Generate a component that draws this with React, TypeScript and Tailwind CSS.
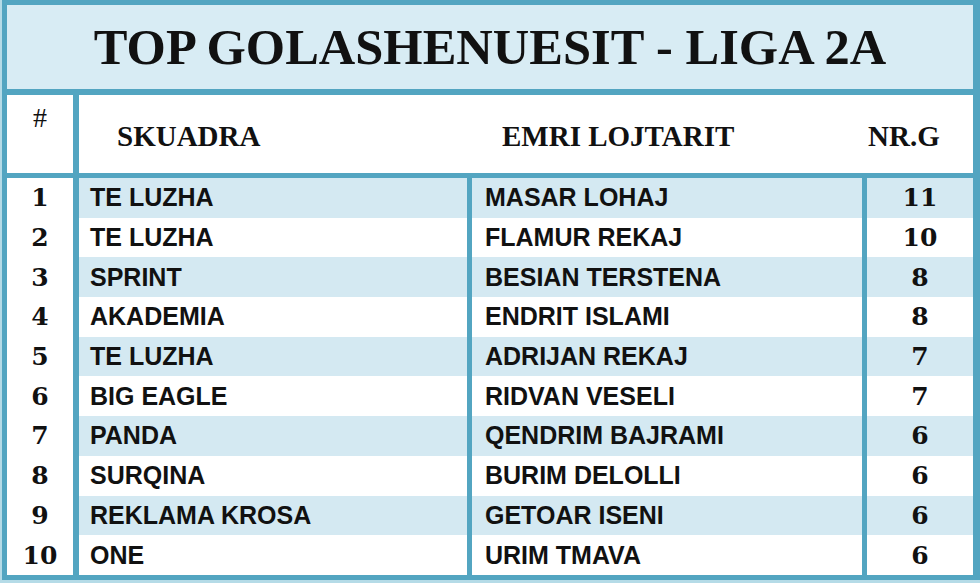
const rows = [
  { team: "TE LUZHA", player: "MASAR LOHAJ", goals: 11 },
  { team: "TE LUZHA", player: "FLAMUR REKAJ", goals: 10 },
  { team: "SPRINT", player: "BESIAN TERSTENA", goals: 8 },
  { team: "AKADEMIA", player: "ENDRIT ISLAMI", goals: 8 },
  { team: "TE LUZHA", player: "ADRIJAN REKAJ", goals: 7 },
  { team: "BIG EAGLE", player: "RIDVAN VESELI", goals: 7 },
  { team: "PANDA", player: "QENDRIM BAJRAMI", goals: 6 },
  { team: "SURQINA", player: "BURIM DELOLLI", goals: 6 },
  { team: "REKLAMA KROSA", player: "GETOAR ISENI", goals: 6 },
  { team: "ONE", player: "URIM TMAVA", goals: 6 },
];

const serif = "font-['Liberation_Serif',serif] font-bold text-[#111]";
const numFont = "font-['DejaVu_Serif',serif] font-bold text-[#111]";
const sans = "font-['Liberation_Sans',Arial,sans-serif] font-bold text-[#111]";

export default function App() {
  return (
    <div className="h-[583px] w-[980px] overflow-hidden bg-[#b5dbe7] pl-[2px]">
      <div className="flex flex-col border-b-[5px] border-l-[5px] border-r-[7px] border-t-[5px] border-[#53a5c1] bg-white">
        <div className="flex h-[90px] items-center justify-center border-b-[6px] border-[#53a5c1] bg-[#d8ecf4]">
          <h1 className={`${serif} text-[50.5px] leading-none`}>
            TOP GOLASHENUESIT - LIGA 2A
          </h1>
        </div>

        <div className="flex h-[83px] border-b-[5px] border-[#53a5c1]">
          <div className="flex w-[72px] shrink-0 justify-center border-r-[6px] border-[#53a5c1] pt-[9px]">
            <span className="font-['Liberation_Serif',serif] text-[28px] leading-none text-[#111]">#</span>
          </div>
          <div className="flex flex-1 items-center pt-[4px]">
            <span className={`${serif} w-[423px] pl-[38px] text-[29px] leading-none`}>SKUADRA</span>
            <span className={`${serif} w-[366px] text-[29px] leading-none`}>EMRI LOJTARIT</span>
            <span className={`${serif} text-[29px] leading-none`}>NR.G</span>
          </div>
        </div>

        <div className="flex flex-col">
          {rows.map((r, i) => {
            const stripe = i % 2 === 0 ? "bg-[#d4e9f2]" : "bg-white";
            return (
              <div key={i} className="flex h-[39.7px]">
                <div className={`${numFont} flex w-[72px] shrink-0 items-center justify-center border-r-[6px] border-[#53a5c1] bg-white text-[25px] leading-none`}>
                  {i + 1}
                </div>
                <div className={`${sans} ${stripe} flex w-[393px] shrink-0 items-center border-r-[5px] border-[#53a5c1] pl-[11px] text-[25px] leading-none`}>
                  {r.team}
                </div>
                <div className={`${sans} ${stripe} flex w-[395px] shrink-0 items-center border-r-[5px] border-[#53a5c1] pl-[13px] text-[25px] leading-none`}>
                  {r.player}
                </div>
                <div className={`${numFont} ${stripe} flex flex-1 items-center justify-center text-[25px] leading-none`}>
                  {r.goals}
                </div>
              </div>
            );
          })}
        </div>
      </div>
    </div>
  );
}
